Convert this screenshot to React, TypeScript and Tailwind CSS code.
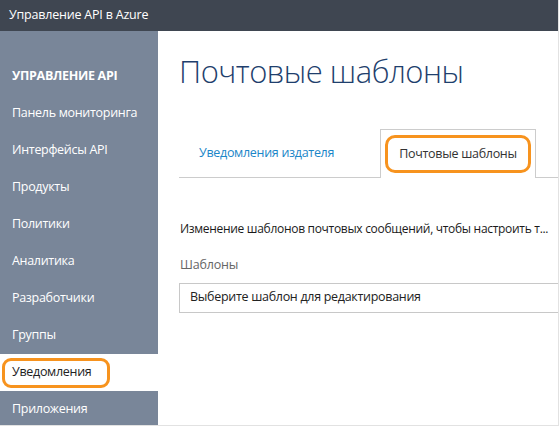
import React from "react";

const items = [
  "Панель мониторинга",
  "Интерфейсы API",
  "Продукты",
  "Политики",
  "Аналитика",
  "Разработчики",
  "Группы",
  "Уведомления",
  "Приложения",
];

export default function App() {
  return (
    <div
      className="w-[559px] h-[426px] overflow-hidden bg-white border-r border-b border-[#e2e2e2] flex flex-col"
      style={{ fontFamily: '"Open Sans", "Noto Sans", sans-serif' }}
    >
      <div className="h-[31px] shrink-0 bg-[#3f4651] text-white text-[12.5px] tracking-[-0.2px] pl-[9px] flex items-center">
        Управление API в Azure
      </div>
      <div className="flex flex-1 min-h-0">
        <aside className="w-[158px] shrink-0 bg-[#798699] pt-[27px] flex flex-col">
          <div className="h-[37px] shrink-0 flex items-center pl-[12px] text-white text-[12.5px] tracking-[-0.3px] font-bold">
            УПРАВЛЕНИЕ API
          </div>
          {items.map((it) =>
            it === "Уведомления" ? (
              <div key={it} className="h-[37px] shrink-0 bg-white flex items-center">
                <div className="ml-[2px] w-[108px] h-[30px] border-[3px] border-[#f7931e] rounded-[9px] flex items-center pl-[7px] text-[12.5px] tracking-[-0.3px] text-[#222]">
                  {it}
                </div>
              </div>
            ) : (
              <div key={it} className="h-[37px] shrink-0 flex items-center pl-[12px] text-white text-[12.5px] tracking-[-0.3px]">
                {it}
              </div>
            )
          )}
        </aside>
        <main className="flex-1 min-w-0 flex flex-col">
          <h1 className="ml-[21px] mt-[20px] text-[31px] tracking-[-0.5px] leading-[40px] font-light text-[#1f3f6d] whitespace-nowrap">
            Почтовые шаблоны
          </h1>
          <div className="ml-[21px] mt-[38px] flex items-end border-b border-[#cccccc] h-[49px]">
            <div className="w-[201px] h-full flex items-center pl-[20px] text-[12.5px] tracking-[-0.3px] text-[#1a86c8] whitespace-nowrap">
              Уведомления издателя
            </div>
            <div className="w-[156px] h-[49px] -mb-px bg-white border border-b-0 border-[#cccccc] flex items-center justify-center">
              <div className="w-[146px] h-[38px] border-[3px] border-[#f7931e] rounded-[10px] flex items-center justify-center text-[12.5px] tracking-[-0.3px] text-[#333] whitespace-nowrap">
                Почтовые шаблоны
              </div>
            </div>
          </div>
          <div className="ml-[22px] mt-[42px] text-[12px] tracking-[-0.3px] text-[#1a1a1a] whitespace-nowrap">
            Изменение шаблонов почтовых сообщений, чтобы настроить т...
          </div>
          <div className="ml-[22px] mt-[18px] text-[12.5px] tracking-[-0.2px] text-[#666]">Шаблоны</div>
          <div className="ml-[21px] mt-[8px] h-[30px] border border-r-0 border-[#c8c8c8] flex items-center pl-[10px] text-[12.5px] tracking-[-0.3px] text-[#222] whitespace-nowrap">
            Выберите шаблон для редактирования
          </div>
        </main>
      </div>
    </div>
  );
}
